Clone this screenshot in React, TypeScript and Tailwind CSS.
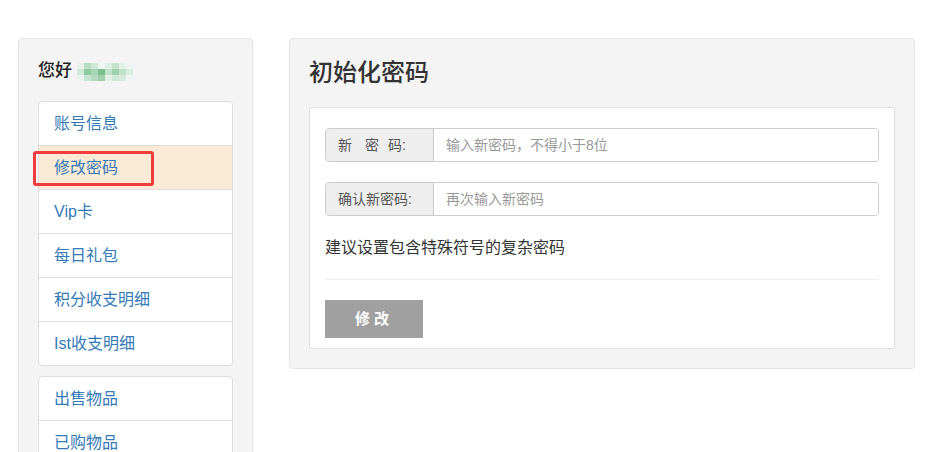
const font = { fontFamily: '"Liberation Sans", "Noto Sans CJK SC", sans-serif' };

const navGroups = [
  ["账号信息", "修改密码", "Vip卡", "每日礼包", "积分收支明细", "Ist收支明细"],
  ["出售物品", "已购物品", "我的收藏"],
];

// pixelated username placeholder
const mosaic = [
  ["#e6f2ea", "#b9ddc4", "#cfe7d7", "#eef6f1", "#dcefe3", "#c4e3cd", "#e3f1e7", "#eef6f1"],
  ["#d2e9da", "#8fc9a0", "#a6d4b3", "#7dbf90", "#c2e1cb", "#9fd1ae", "#bfe0c9", "#d9ede0"],
  ["#eaf4ee", "#c6e4cf", "#b3dabf", "#9ccfaa", "#e0f0e5", "#cde8d5", "#d6ebdd", "#eef6f1"],
];

function Sidebar() {
  return (
    <div className="w-[235px] shrink-0 self-start bg-[#f4f4f4] border border-[#e3e3e3] rounded-[4px] px-[19px] pt-[18px] pb-6">
      <div className="flex items-center gap-[5px] h-[24px] mb-[20px] pt-[4px]">
        <span className="text-[17px] text-[#222] font-medium">您好</span>
        <div className="flex flex-col mt-[1px]">
          {mosaic.map((row, i) => (
            <div key={i} className="flex">
              {row.map((c, j) => (
                <div key={j} className="w-[7px] h-[6px]" style={{ backgroundColor: c }} />
              ))}
            </div>
          ))}
        </div>
      </div>
      {navGroups.map((group, gi) => (
        <div
          key={gi}
          className="relative bg-white border border-[#dddddd] rounded-[4px] mb-[10px]"
        >
          {group.map((label, i) => (
            <div
              key={label}
              className={
                "flex items-center pl-[15px] text-[16px] text-[#337ab7] " +
                (i === 0 ? "h-[43px] " : "h-[44px] border-t border-[#dddddd] ") +
                (label === "修改密码" ? "bg-[#faead6]" : "")
              }
            >
              {label}
            </div>
          ))}
          {gi === 0 && (
            <div className="absolute left-[-6px] top-[49px] w-[121px] h-[35px] border-[3px] border-[#f03c3c] rounded-[3px]" />
          )}
        </div>
      ))}
    </div>
  );
}

function Field({ label, placeholder }: { label: React.ReactNode; placeholder: string }) {
  return (
    <div className="flex h-[34px] border border-[#cccccc] rounded-[4px] overflow-hidden">
      <div className="w-[108px] shrink-0 bg-[#eeeeee] border-r border-[#cccccc] flex items-center pl-[12px] text-[14px] text-[#555] whitespace-nowrap">
        {label}
      </div>
      <input
        className="flex-1 px-[12px] text-[14px] text-[#555] placeholder:text-[#999] outline-none bg-white"
        placeholder={placeholder}
        style={font}
      />
    </div>
  );
}

export default function App() {
  return (
    <div className="h-[452px] bg-white flex gap-[36px] pl-[18px] pt-[38px] overflow-hidden" style={font}>
      <Sidebar />
      <div className="w-[626px] self-start bg-[#f4f4f4] border border-[#e3e3e3] rounded-[4px] px-[19px] pt-[19px] pb-[19px]">
        <h1 className="text-[24px] text-[#333] leading-[30px] font-medium mb-[19px]">初始化密码</h1>
        <div className="bg-white border border-[#dddddd] rounded-[3px] px-[15px] pt-[20px] pb-[10px]">
          <Field
            label={
              <span className="flex">
                <span className="mr-[13px]">新</span>
                <span className="mr-[9px]">密</span>
                <span>码:</span>
              </span>
            }
            placeholder="输入新密码，不得小于8位"
          />
          <div className="h-[20px]" />
          <Field label="确认新密码:" placeholder="再次输入新密码" />
          <p className="text-[16px] text-[#333] mt-[20px] leading-[24px]">建议设置包含特殊符号的复杂密码</p>
          <div className="border-t border-[#eeeeee] mt-[19px] mb-[20px]" />
          <button className="w-[98px] h-[38px] bg-[#a0a0a0] text-white text-[15px] font-bold tracking-[4px]">
            修改
          </button>
        </div>
      </div>
    </div>
  );
}
